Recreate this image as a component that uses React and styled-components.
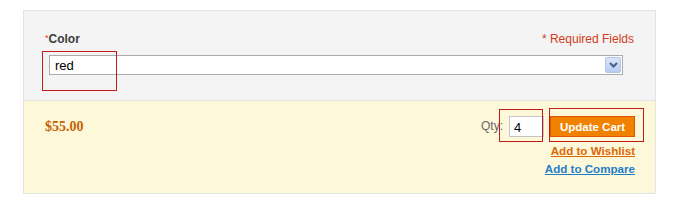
import styled, { createGlobalStyle } from 'styled-components';

const GlobalStyle = createGlobalStyle`
  body {
    margin: 0;
    background: #fff;
    font-family: "Liberation Sans", Arial, sans-serif;
    font-size: 12px;
  }
`;

const Box = styled.div`
  box-sizing: border-box;
  width: 633px;
  margin: 10px 0 0 23px;
  border: 1px solid #e4e4e4;
`;

const Options = styled.div`
  box-sizing: border-box;
  height: 90px;
  padding: 20px 21px 0 21px;
  background: #f4f4f4;
  border-bottom: 1px solid #e4e4e4;
`;

const HeaderRow = styled.div`
  display: flex;
  justify-content: space-between;
  align-items: baseline;
  line-height: 15px;
`;

const Label = styled.span`
  font-weight: bold;
  color: #3c3c3c;
  font-size: 12px;
`;

const Star = styled.em`
  font-style: normal;
  font-weight: normal;
  color: #eb340a;
  font-size: 9px;
  vertical-align: 2px;
`;

const Required = styled.span`
  color: #d23c18;
  font-size: 12px;
`;

const Annotated = styled.div`
  position: relative;
  display: ${p => (p.$block ? 'block' : 'inline-block')};
`;

const Mark = styled.span`
  position: absolute;
  box-sizing: border-box;
  border: 1px solid #c41a1a;
  pointer-events: none;
  left: ${p => p.$l}px;
  top: ${p => p.$t}px;
  width: ${p => p.$w}px;
  height: ${p => p.$h}px;
`;

const SelectWrap = styled.div`
  margin: 8px 0 0 4px;
  width: 574px;
`;

const Select = styled.div`
  box-sizing: border-box;
  display: flex;
  align-items: center;
  justify-content: space-between;
  height: 20px;
  padding: 0 1px 0 5px;
  background: #fff;
  border: 1px solid #acacac;
  font-size: 13px;
  color: #000;
`;

const Arrow = styled.span`
  box-sizing: border-box;
  display: flex;
  align-items: center;
  justify-content: center;
  width: 16px;
  height: 16px;
  background: linear-gradient(#dbe5f8, #b9ccf0);
  border: 1px solid #b3c4e6;
  border-radius: 2px;
`;

const Bottom = styled.div`
  box-sizing: border-box;
  height: 92px;
  display: flex;
  justify-content: space-between;
  align-items: flex-start;
  padding: 15px 20px 0 21px;
  background: #fef8db;
`;

const Price = styled.span`
  margin-top: 3px;
  font-family: "Liberation Serif", "Times New Roman", serif;
  font-weight: bold;
  font-size: 14px;
  color: #c76200;
`;

const Actions = styled.div`
  display: flex;
  flex-direction: column;
  align-items: flex-end;
`;

const CartRow = styled.div`
  display: flex;
  align-items: flex-start;
`;

const QtyLabel = styled.span`
  margin: 3px 6px 0 0;
  color: #666;
  font-size: 12px;
`;

const QtyInput = styled.div`
  box-sizing: border-box;
  width: 35px;
  height: 21px;
  padding: 3px 0 0 4px;
  background: #fff;
  border: 1px solid #c4c4c4;
  font-size: 13px;
  color: #000;
`;

const Button = styled.div`
  box-sizing: border-box;
  width: 85px;
  height: 21px;
  margin-left: 6px;
  display: flex;
  align-items: center;
  justify-content: center;
  background: #f18200;
  border: 1px solid #de5400;
  color: #fff;
  font-weight: bold;
  font-size: 11.5px;
`;

const Link = styled.a`
  display: block;
  line-height: 18px;
  font-weight: bold;
  font-size: 11.6px;
  text-decoration: underline;
  color: ${p => p.$color};
  margin-top: ${p => p.$mt || 0}px;
`;

const App = () => (
  <>
    <GlobalStyle />
    <Box>
      <Options>
        <HeaderRow>
          <Label><Star>*</Star>Color</Label>
          <Required>* Required Fields</Required>
        </HeaderRow>
        <SelectWrap>
          <Annotated $block>
            <Select>
              <span>red</span>
              <Arrow>
                <svg width="9" height="6" viewBox="0 0 9 6">
                  <path d="M1 1 L4.5 4.5 L8 1" stroke="#4a5d86" strokeWidth="2" fill="none" />
                </svg>
              </Arrow>
            </Select>
            <Mark $l={-7} $t={-4} $w={75} $h={40} />
          </Annotated>
        </SelectWrap>
      </Options>
      <Bottom>
        <Price>$55.00</Price>
        <Actions>
          <CartRow>
            <QtyLabel>Qty:</QtyLabel>
            <Annotated>
              <QtyInput>4</QtyInput>
              <Mark $l={-10} $t={-7} $w={44} $h={33} />
            </Annotated>
            <Annotated>
              <Button>Update Cart</Button>
              <Mark $l={5} $t={-8} $w={95} $h={34} />
            </Annotated>
          </CartRow>
          <Link $color="#dc6809" $mt={5}>Add to Wishlist</Link>
          <Link $color="#1e7ec8">Add to Compare</Link>
        </Actions>
      </Bottom>
    </Box>
  </>
);

export default App;
